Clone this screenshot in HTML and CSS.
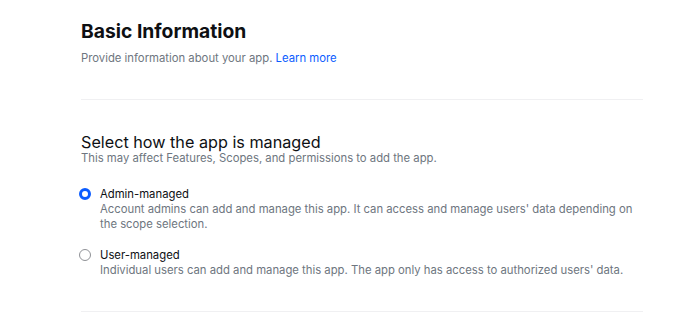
FILE: index.html
```html
<!DOCTYPE html>
<html lang="en">
<head>
    <meta charset="UTF-8">
    <meta name="viewport" content="width=device-width, initial-scale=1.0">
    <title>Basic Information</title>
    <link rel="stylesheet" href="styles.css">
</head>
<body>
    <div class="container">
        <section class="section intro">
            <h1>Basic Information</h1>
            <p class="hint">Provide information about your app. <a href="#">Learn more</a></p>
        </section>

        <section class="section manage">
            <h2>Select how the app is managed</h2>
            <p class="hint">This may affect Features, Scopes, and permissions to add the app.</p>

            <div class="radio-list">
                <label class="radio-option">
                    <input type="radio" name="managedBy" value="admin" checked>
                    <span class="radio-mark"></span>
                    <span class="radio-text">
                        <span class="radio-title">Admin-managed</span>
                        <span class="radio-desc">Account admins can add and manage this app. It can access and manage users' data depending on the scope selection.</span>
                    </span>
                </label>
                <label class="radio-option">
                    <input type="radio" name="managedBy" value="user">
                    <span class="radio-mark"></span>
                    <span class="radio-text">
                        <span class="radio-title">User-managed</span>
                        <span class="radio-desc">Individual users can add and manage this app. The app only has access to authorized users' data.</span>
                    </span>
                </label>
            </div>
        </section>
    </div>
</body>
</html>
```

FILE: styles.css
```css
body {
    font-family: Inter, 'Noto Sans', sans-serif;
    background-color: #fff;
    color: #0e1013;
    margin: 0;
    padding: 0;
}
.container {
    width: 562px;
    margin-left: 81px;
    padding-top: 19px;
}
.section {
    border-bottom: 1px solid #f0f0f2;
}
.intro {
    padding-bottom: 33px;
}
.manage {
    padding-top: 33px;
    padding-bottom: 33px;
}
h1 {
    font-size: 19.3px;
    font-weight: 700;
    line-height: 24px;
    margin: 0 0 8px;
}
h2 {
    font-size: 16.2px;
    font-weight: 400;
    line-height: 18px;
    margin: 0;
}
.hint {
    font-size: 11.3px;
    line-height: 15px;
    color: #6e7680;
    margin: 0;
}
.hint a {
    color: #0b5cff;
    text-decoration: none;
}
.radio-list {
    display: flex;
    flex-direction: column;
    gap: 15px;
    margin-top: 20px;
}
.radio-option {
    display: flex;
    align-items: flex-start;
    gap: 9px;
    margin-left: -2px;
    cursor: pointer;
}
.radio-option input {
    display: none;
}
.radio-mark {
    flex: none;
    width: 12px;
    height: 12px;
    margin-top: 2px;
    box-sizing: border-box;
    border: 1px solid #8f9196;
    border-radius: 50%;
}
.radio-option input:checked + .radio-mark {
    border: 3.5px solid #0b5cff;
}
.radio-text {
    display: flex;
    flex-direction: column;
}
.radio-title {
    font-size: 11.3px;
    line-height: 16px;
    color: #0e1013;
}
.radio-desc {
    font-size: 11.3px;
    line-height: 15px;
    color: #6e7680;
}
```
